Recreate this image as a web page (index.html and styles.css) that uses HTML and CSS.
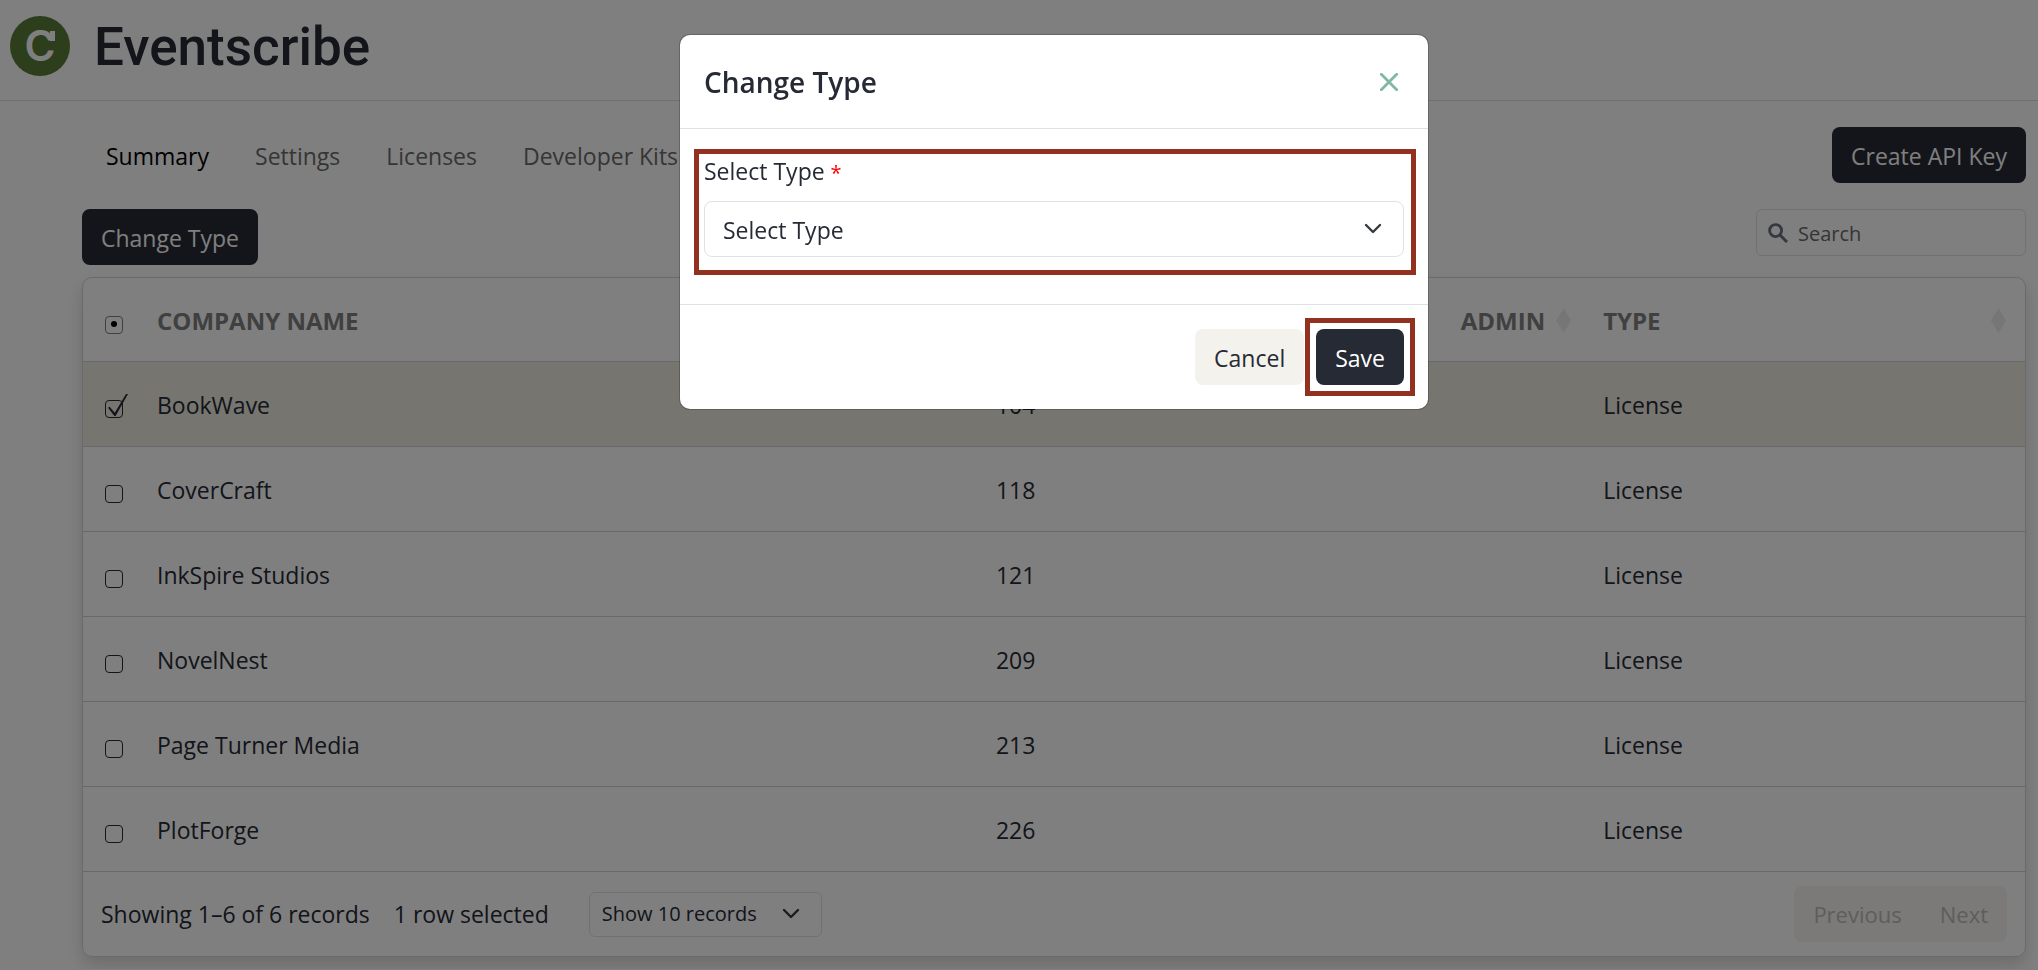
FILE: index.html
```
<!DOCTYPE html>
<html lang="en">
<head>
<meta charset="UTF-8" />
<meta name="viewport" content="width=device-width, initial-scale=1.0" />
<title>Eventscribe</title>
<link rel="stylesheet" href="styles.css">
</head>
<body>
<header class="site-header">
  <svg class="logo" viewBox="0 0 60 60" aria-hidden="true">
    <circle cx="30" cy="30" r="30" fill="#5a7c38" />
    <text class="logo-letter" x="30" y="45" text-anchor="middle">C</text>
    <rect x="40" y="15" width="5" height="10" fill="#fff" />
  </svg>
  <h1>Eventscribe</h1>
</header>

<main class="content">
  <div class="top-bar">
    <nav class="tabs">
      <a href="#" class="active">Summary</a>
      <a href="#">Settings</a>
      <a href="#">Licenses</a>
      <a href="#">Developer Kits</a>
    </nav>
    <button type="button" class="btn btn-dark">Create API Key</button>
  </div>

  <div class="toolbar">
    <button type="button" class="btn btn-dark">Change Type</button>
    <div class="search">
      <svg viewBox="0 0 20 20" width="20" height="20" aria-hidden="true">
        <circle cx="7.6" cy="7.6" r="6" fill="none" stroke="#6c7083" stroke-width="2.8" />
        <path d="M12 12l7 7" stroke="#6c7083" stroke-width="3" />
      </svg>
      <input type="search" placeholder="Search" aria-label="Search" />
    </div>
  </div>

  <div class="card">
    <table class="companies">
      <colgroup>
        <col class="col-check" />
        <col class="col-name" />
        <col class="col-id" />
        <col class="col-admin" />
        <col class="col-type" />
      </colgroup>
      <thead>
        <tr>
          <th><input type="checkbox" class="some" aria-label="Select all" /></th>
          <th>COMPANY NAME</th>
          <th></th>
          <th><div class="sort-head end">ADMIN <i class="sort"></i></div></th>
          <th><div class="sort-head">TYPE <i class="sort"></i></div></th>
        </tr>
      </thead>
      <tbody>
        <tr class="selected">
          <td><input type="checkbox" aria-label="BookWave" checked /></td>
          <td>BookWave</td><td>104</td><td></td><td>License</td>
        </tr>
        <tr>
          <td><input type="checkbox" aria-label="CoverCraft" /></td>
          <td>CoverCraft</td><td>118</td><td></td><td>License</td>
        </tr>
        <tr>
          <td><input type="checkbox" aria-label="InkSpire Studios" /></td>
          <td>InkSpire Studios</td><td>121</td><td></td><td>License</td>
        </tr>
        <tr>
          <td><input type="checkbox" aria-label="NovelNest" /></td>
          <td>NovelNest</td><td>209</td><td></td><td>License</td>
        </tr>
        <tr>
          <td><input type="checkbox" aria-label="Page Turner Media" /></td>
          <td>Page Turner Media</td><td>213</td><td></td><td>License</td>
        </tr>
        <tr>
          <td><input type="checkbox" aria-label="PlotForge" /></td>
          <td>PlotForge</td><td>226</td><td></td><td>License</td>
        </tr>
      </tbody>
    </table>
    <div class="card-footer">
      <span>Showing 1–6 of 6 records</span>
      <span>1 row selected</span>
      <select class="page-size" aria-label="Records per page">
        <option>Show 10 records</option>
      </select>
      <div class="pager">
        <button type="button" class="btn" disabled>Previous</button>
        <button type="button" class="btn" disabled>Next</button>
      </div>
    </div>
  </div>
</main>

<div class="overlay">
  <form class="modal" role="dialog" aria-labelledby="modalTitle" onsubmit="return false;">
    <div class="modal-header">
      <h2 id="modalTitle">Change Type</h2>
      <button type="button" class="close" aria-label="Close">
        <svg viewBox="0 0 18 18" width="18" height="18" aria-hidden="true">
          <path d="M1.3 1.3l15.4 15.4M16.7 1.3L1.3 16.7" stroke="#7fb8a4" stroke-width="2.8" stroke-linecap="round" />
        </svg>
      </button>
    </div>
    <div class="modal-body">
      <div class="field marked">
        <label for="typeSelect">Select Type <span class="required">*</span></label>
        <select id="typeSelect">
          <option>Select Type</option>
        </select>
      </div>
    </div>
    <div class="modal-footer">
      <button type="button" class="btn btn-light">Cancel</button>
      <div class="marked">
        <button type="submit" class="btn btn-dark">Save</button>
      </div>
    </div>
  </form>
</div>
</body>
</html>
```
FILE: styles.css
```
* {
  box-sizing: border-box;
}
body {
  margin: 0;
  background: #fff;
  color: #262a35;
  font-family: "Open Sans", "Noto Sans", sans-serif;
  font-size: 23px;
  line-height: 32px;
}
button, input, select {
  font: inherit;
  color: inherit;
}
.site-header {
  display: flex;
  align-items: center;
  gap: 24px;
  height: 101px;
  padding: 0 10px 8px;
  border-bottom: 1px solid #dcdcdc;
}
.site-header h1 {
  margin: 0;
  padding-top: 2px;
  font-family: Roboto, sans-serif;
  font-size: 53px;
  font-weight: 500;
  line-height: 60px;
}
.logo {
  width: 60px;
  height: 60px;
}
.logo-letter {
  font-family: Inter, sans-serif;
  font-size: 42px;
  font-weight: 600;
  fill: #fff;
}
.content {
  padding: 26px 12px 12px 82px;
}
.top-bar,
.toolbar {
  display: flex;
  justify-content: space-between;
  align-items: flex-start;
}
.tabs {
  display: flex;
  gap: 46px;
  padding: 13px 24px 11px;
}
.tabs a {
  color: #6b6b6b;
  text-decoration: none;
}
.tabs a.active {
  color: #000;
}
.btn {
  height: 56px;
  padding: 2px 19px 0;
  border: none;
  border-radius: 8px;
  cursor: pointer;
}
.btn-dark {
  background: #262a35;
  color: #fff;
}
.btn-light {
  background: #f3f2ec;
}
.toolbar {
  margin: 26px 0 12px;
}
.search {
  display: flex;
  align-items: center;
  gap: 10px;
  width: 270px;
  height: 47px;
  padding: 0 11px;
  border: 1px solid #dee2e6;
  border-radius: 6px;
}
.search svg {
  flex: none;
}
.search input {
  width: 100%;
  padding: 2px 0 0;
  border: none;
  outline: none;
  background: none;
  font-size: 20px;
}
.search input::placeholder {
  color: #6b6b6b;
}
.card {
  border: 1px solid #d3d4d8;
  border-radius: 10px;
  box-shadow: 0 8px 16px rgba(0,0,0,0.15);
  overflow: hidden;
}
.companies {
  width: 100%;
  table-layout: fixed;
  border-collapse: separate;
  border-spacing: 0;
}
.col-check { width: 55px; }
.col-name { width: 43.2%; }
.col-id { width: 18%; }
.col-type { width: 22.7%; }
.companies th,
.companies td {
  height: 85px;
  padding: 2px 19px 0;
  border-bottom: 1px solid #d0d0d5;
  text-align: left;
}
.companies th {
  height: 84px;
  color: #808080;
  font-size: 24px;
  font-weight: 700;
}
.companies th:first-child,
.companies td:first-child {
  padding: 10px 0 0 22px;
}
.selected {
  background: #eceae0;
}
.sort-head {
  display: flex;
  align-items: center;
  justify-content: space-between;
}
.sort-head.end {
  justify-content: flex-end;
  gap: 11px;
  margin-right: -6px;
}
.sort {
  width: 15px;
  height: 25px;
  background: #ececec;
  clip-path: polygon(50% 0, 100% 50%, 50% 100%, 0 50%);
}
input[type="checkbox"] {
  position: relative;
  display: block;
  width: 18px;
  height: 18px;
  margin: 0;
  appearance: none;
  border: 1px solid #262a35;
  border-radius: 4px;
  cursor: pointer;
}
input[type="checkbox"]:checked::after {
  content: "";
  position: absolute;
  left: 2px;
  bottom: 1px;
  width: 20px;
  height: 22px;
  background: #262a35;
  clip-path: polygon(0 62%, 8% 58%, 34% 85%, 90% 0, 100% 0, 38% 100%, 32% 100%);
}
input.some {
  border-color: #808080;
}
input.some::after {
  content: "";
  position: absolute;
  left: 5px;
  top: 4px;
  width: 6px;
  height: 6px;
  border-radius: 50%;
  background: #000;
}
.card-footer {
  display: flex;
  align-items: center;
  gap: 24px;
  height: 84px;
  padding: 0 18px;
}
select {
  appearance: none;
  border: 1px solid #dee2e6;
  border-radius: 8px;
  background: url("data:image/svg+xml,%3Csvg xmlns='http://www.w3.org/2000/svg' viewBox='0 0 18 12'%3E%3Cpath d='M2 2l7 7 7-7' fill='none' stroke='%23343a40' stroke-width='2.4' stroke-linecap='round' stroke-linejoin='round'/%3E%3C/svg%3E") no-repeat right 21px center / 18px 12px;
}
.page-size {
  width: 233px;
  height: 45px;
  margin-left: 16px;
  padding: 0 12px;
  border-radius: 6px;
  font-size: 20px;
}
.pager {
  display: flex;
  margin-left: auto;
  border-radius: 8px;
  background: #f6f5f0;
}
.pager .btn {
  padding-top: 0;
  background: none;
  color: #babbc0;
  font-size: 22px;
}

/* Modal */
.overlay {
  position: fixed;
  inset: 0;
  display: flex;
  justify-content: center;
  align-items: flex-start;
  padding: 35px 0 0 70px;
  background: rgba(0,0,0,0.5);
}
.modal {
  width: 748px;
  border-radius: 10px;
  background: #fff;
  box-shadow: 0 0 0 1px rgba(0,0,0,0.2);
}
.modal-header {
  display: flex;
  justify-content: space-between;
  align-items: center;
  height: 94px;
  padding: 0 28px 0 24px;
  border-bottom: 1px solid #dee2e6;
}
.modal-header h2 {
  margin: 0;
  font-size: 28px;
  font-weight: 600;
}
.close {
  display: flex;
  padding: 2px;
  border: none;
  background: none;
  cursor: pointer;
}
.modal-body {
  padding: 26px 24px 47px;
}
.field label {
  display: block;
  margin-bottom: 12px;
}
.field select {
  display: block;
  width: 100%;
  height: 56px;
  padding: 2px 18px 0;
}
.required {
  color: #f00;
  font-size: 20px;
}
.marked {
  position: relative;
}
.marked::after {
  content: "";
  position: absolute;
  inset: -11px;
  border: 5px solid #933121;
  pointer-events: none;
}
.field.marked::after {
  inset: -6px -12px -18px -10px;
}
.modal-footer {
  display: flex;
  justify-content: flex-end;
  gap: 12px;
  padding: 24px;
  border-top: 1px solid #dee2e6;
}
```
